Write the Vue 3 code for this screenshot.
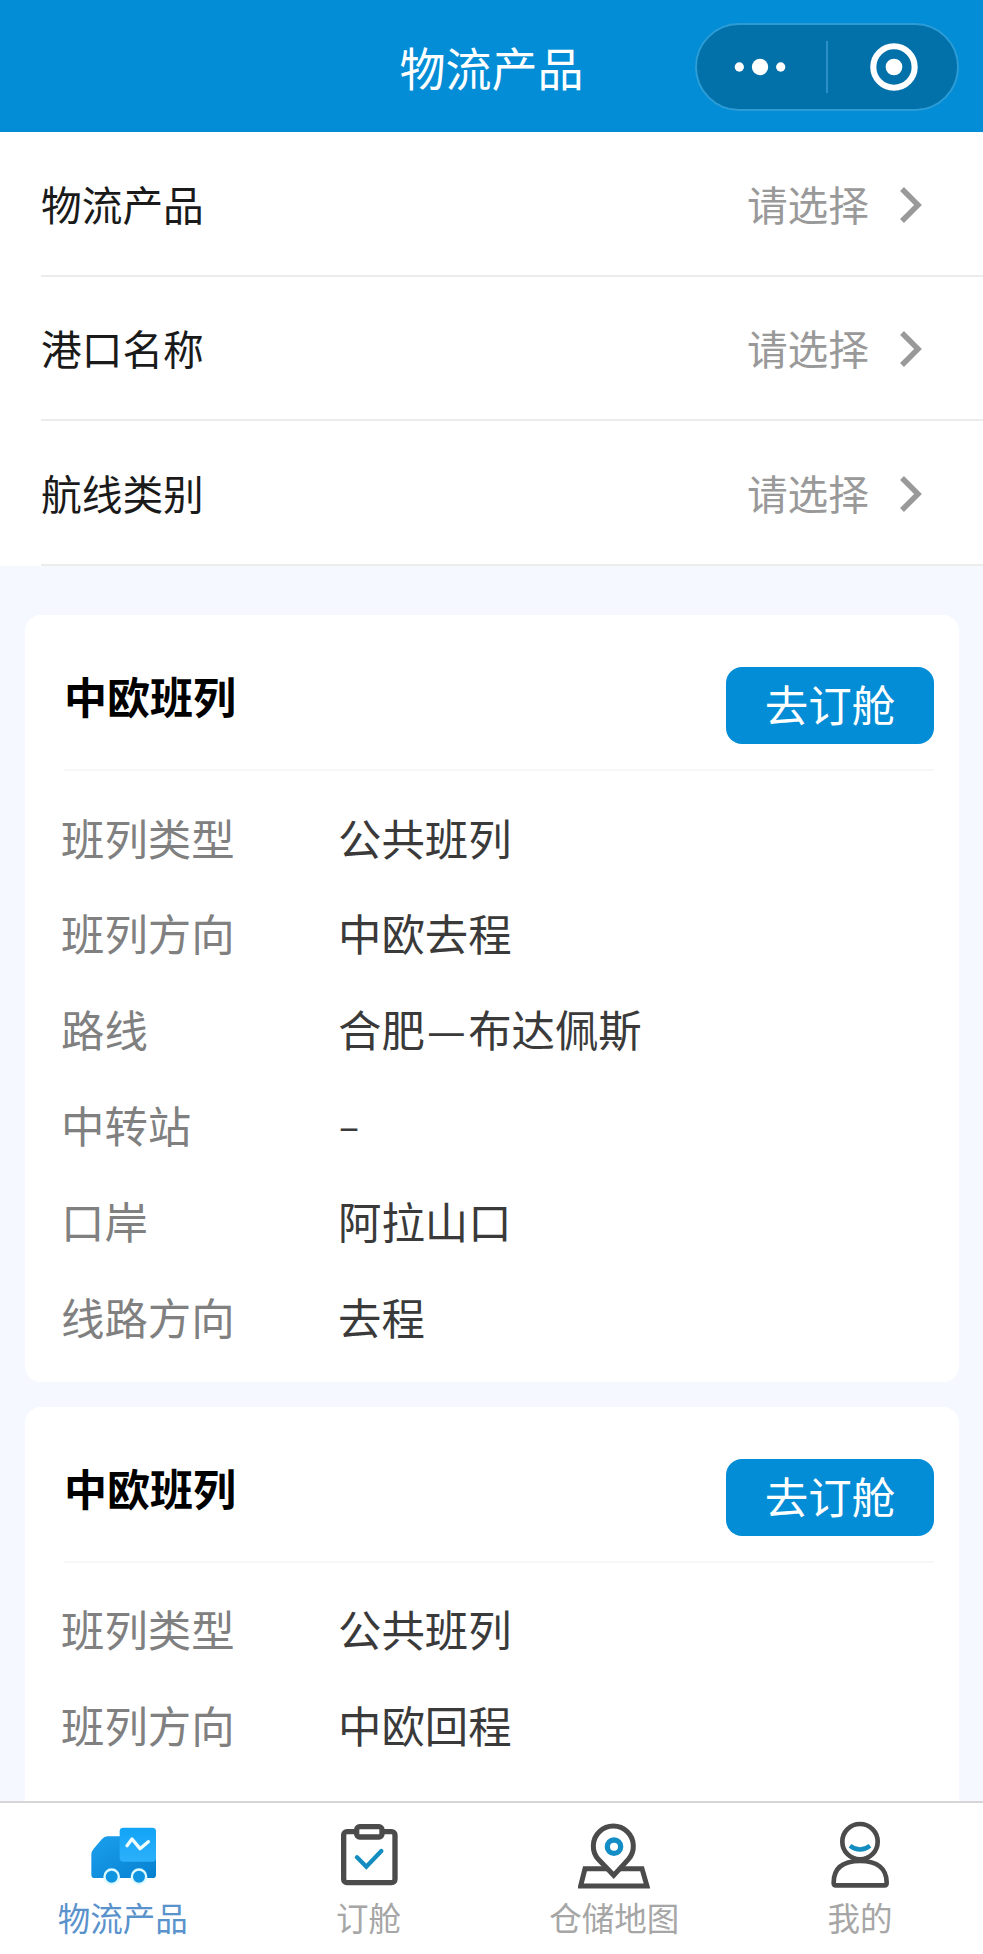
<script setup>
import { ref } from 'vue';

const filters = ref(['物流产品', '港口名称', '航线类别']);

const products = ref([
  {
    title: '中欧班列',
    rows: [
      ['班列类型', '公共班列'],
      ['班列方向', '中欧去程'],
      ['路线', '合肥—布达佩斯'],
      ['中转站', '–'],
      ['口岸', '阿拉山口'],
      ['线路方向', '去程'],
    ],
  },
  {
    title: '中欧班列',
    rows: [
      ['班列类型', '公共班列'],
      ['班列方向', '中欧回程'],
    ],
  },
]);

const active = ref('product');

// the dash of a route takes a full character cell, so it is rendered on its own
function parts(value) {
  return value.split(/(—)/);
}
</script>

<template>
  <div class="page">
    <header class="nav">
      <h1 class="nav__title">物流产品</h1>
      <div class="capsule">
        <svg class="capsule__icon" viewBox="0 0 131 86">
          <circle cx="43" cy="43" r="4.7" />
          <circle cx="64" cy="43" r="8.3" />
          <circle cx="85" cy="43" r="4.7" />
        </svg>
        <span class="capsule__line"></span>
        <svg class="capsule__icon" viewBox="0 0 131 86">
          <circle cx="67" cy="43" r="21" fill="none" stroke="#fff" stroke-width="6.2" />
          <circle cx="67" cy="43" r="8.5" />
        </svg>
      </div>
    </header>

    <section class="filters">
      <div v-for="name in filters" :key="name" class="filter">
        <span class="filter__name">{{ name }}</span>
        <span class="filter__value">请选择</span>
        <svg class="filter__arrow" viewBox="0 0 24 40">
          <path d="M3 4 L19 20 L3 36" fill="none" stroke="#999" stroke-width="5.5" />
        </svg>
      </div>
    </section>

    <main class="list">
      <article v-for="(item, i) in products" :key="i" class="card">
        <div class="card__head">
          <h2 class="card__title">{{ item.title }}</h2>
          <button class="card__button">去订舱</button>
        </div>
        <dl class="card__body">
          <div v-for="row in item.rows" :key="row[0]" class="card__row">
            <dt>{{ row[0] }}</dt>
            <dd :class="{ card__empty: row[1] === '–' }">
              <span v-for="(part, n) in parts(row[1])" :key="n" :class="{ card__dash: part === '—' }">{{ part }}</span>
            </dd>
          </div>
        </dl>
      </article>
    </main>

    <nav class="tabs">
      <a class="tab" :class="{ 'tab--active': active === 'product' }" @click="active = 'product'">
        <svg class="tab__icon" viewBox="109 87 216 216">
          <defs>
            <linearGradient id="truck-body" x1="0" y1="0" x2="1" y2="1">
              <stop offset="0" stop-color="#1ba0ee" />
              <stop offset="1" stop-color="#0580cf" />
            </linearGradient>
            <linearGradient id="truck-box" x1="0" y1="0" x2="0" y2="1">
              <stop offset="0" stop-color="#12a4f6" />
              <stop offset="1" stop-color="#2cb0fb" />
            </linearGradient>
          </defs>
          <path d="M170 139 H316 V254 Q316 264 306 264 H132 Q122 264 122 254 V194 Q122 184 129 176 L154 147 Q161 139 170 139 Z" fill="url(#truck-body)" />
          <rect x="207" y="113" width="109" height="102" rx="11" fill="url(#truck-box)" />
          <path d="M229 167 L244 147 L268 176 L293 155" fill="none" stroke="#f2fdff" stroke-width="10" stroke-linejoin="round" stroke-linecap="round" />
          <circle cx="183" cy="260" r="21.500" fill="#0f94e2" stroke="#dcfaff" stroke-width="7" />
          <circle cx="265" cy="260" r="21.500" fill="#0f94e2" stroke="#dcfaff" stroke-width="7" />
        </svg>
        <span>物流产品</span>
      </a>
      <a class="tab" :class="{ 'tab--active': active === 'booking' }" @click="active = 'booking'">
        <svg class="tab__icon" viewBox="99 87 216 216" fill="none" stroke="#4b4b4b" stroke-width="16">
          <rect x="131" y="125" width="154" height="153" rx="10" />
          <rect x="170" y="110" width="76" height="31" rx="9" fill="#fff" />
          <path d="M171 202 L199 230 L244 183" stroke="#138dc0" stroke-width="13" stroke-linecap="round" />
        </svg>
        <span>订舱</span>
      </a>
      <a class="tab" :class="{ 'tab--active': active === 'map' }" @click="active = 'map'">
        <svg class="tab__icon" viewBox="130 87 216 216" fill="none" stroke="#4b4b4b" stroke-width="15">
          <path d="M151 236 H322 L337 288 H138 Z" />
          <path d="M237 256 L191 208 A60 60 0 1 1 281 208 Z" fill="#fff" />
          <circle cx="238" cy="170" r="20" stroke="#138dc6" stroke-width="16" />
        </svg>
        <span>仓储地图</span>
      </a>
      <a class="tab" :class="{ 'tab--active': active === 'mine' }" @click="active = 'mine'">
        <svg class="tab__icon" viewBox="132 87 216 216" fill="none" stroke="#4b4b4b" stroke-width="14">
          <circle cx="240" cy="155" r="53" />
          <path d="M168 286 Q161 286 161 278 C161 235 188 213 240 213 C292 213 320 235 320 278 Q320 286 313 286 Z" />
          <path d="M210 167 Q240 190 270 167" stroke="#138dc0" stroke-width="13" />
        </svg>
        <span>我的</span>
      </a>
    </nav>
  </div>
</template>

<style>
body {
  margin: 0;
}
</style>

<style scoped>
.page {
  box-sizing: border-box;
  display: flex;
  flex-direction: column;
  height: 1954px;
  overflow: hidden;
  background: #f5f8ff;
  font-family: "Noto Sans CJK SC", sans-serif;
}

.nav {
  display: grid;
  grid-template-columns: 1fr auto 1fr;
  flex: none;
  align-items: center;
  height: 132px;
  background: #028dd6;
}

.nav__title {
  grid-column: 2;
  margin: 0;
  color: #fff;
  font-size: 46px;
  font-weight: 400;
  line-height: 60px;
}

.capsule {
  box-sizing: border-box;
  display: flex;
  justify-self: end;
  align-items: center;
  width: 264px;
  height: 88px;
  margin: 2px 24px 0 0;
  border: 2px solid #2b9cd6;
  border-radius: 44px;
  background: #0270a9;
}

.capsule__icon {
  flex: 1;
  width: 129px;
  height: 86px;
  fill: #fff;
}

.capsule__line {
  width: 2px;
  height: 52px;
  background: #2b90c6;
}

.filters {
  flex: none;
  padding-left: 41px;
  background: #fff;
}

.filter {
  box-sizing: border-box;
  display: flex;
  align-items: center;
  height: 144.6px;
  padding-right: 60px;
  border-bottom: 2px solid #ececec;
  font-size: 40.7px;
}

.filter__name {
  flex: 1;
  color: #1a1a1a;
}

.filter__value {
  color: #999;
}

.filter__arrow {
  width: 24px;
  height: 40px;
  margin: 3px 0 0 30px;
}

.list {
  display: flex;
  flex: 1;
  flex-direction: column;
  gap: 25px;
  min-height: 0;
  padding: 49px 24px 0 25px;
  overflow: hidden;
}

.card {
  box-sizing: border-box;
  flex: none;
  padding: 0 25px 18px 36px;
  border-radius: 16px;
  background: #fff;
}

.card:last-child {
  min-height: 480px;
}

.card__head {
  box-sizing: border-box;
  display: flex;
  align-items: center;
  justify-content: space-between;
  height: 156px;
  margin-left: 3px;
  padding-top: 27px;
  border-bottom: 2px solid #f7f7f7;
}

.card__title {
  margin: 0 0 20px;
  color: #000;
  font-size: 43px;
  font-weight: 700;
  line-height: 60px;
}

.card__button {
  width: 208px;
  height: 77px;
  padding: 0 0 3px;
  border: 0;
  border-radius: 16px;
  background: #028dd6;
  color: #fff;
  font-family: inherit;
  font-size: 43.5px;
  line-height: 74px;
}

.card__body {
  margin: 0;
  padding-top: 18px;
}

.card__row {
  display: flex;
  align-items: center;
  height: 95.8px;
  font-size: 43.4px;
}

.card__row dt {
  width: 277px;
  color: #808080;
}

.card__row dd {
  margin: 0;
  color: #3a3a3a;
}

.card__dash {
  display: inline-block;
  width: 1em;
  text-align: center;
}

.card__row .card__empty {
  padding-top: 11px;
  font-family: Roboto, sans-serif;
  font-size: 34px;
}

.tabs {
  box-sizing: border-box;
  display: flex;
  flex: none;
  height: 153px;
  border-top: 2px solid #d6d6d9;
  background: #fff;
}

.tab {
  display: flex;
  flex: 1;
  flex-direction: column;
  align-items: center;
  padding-top: 16px;
  color: #a6a6a6;
  font-size: 32.5px;
  line-height: 48px;
}

.tab--active {
  color: #5a92cc;
}

.tab__icon {
  width: 72px;
  height: 72px;
  margin-bottom: 2px;
}
</style>
